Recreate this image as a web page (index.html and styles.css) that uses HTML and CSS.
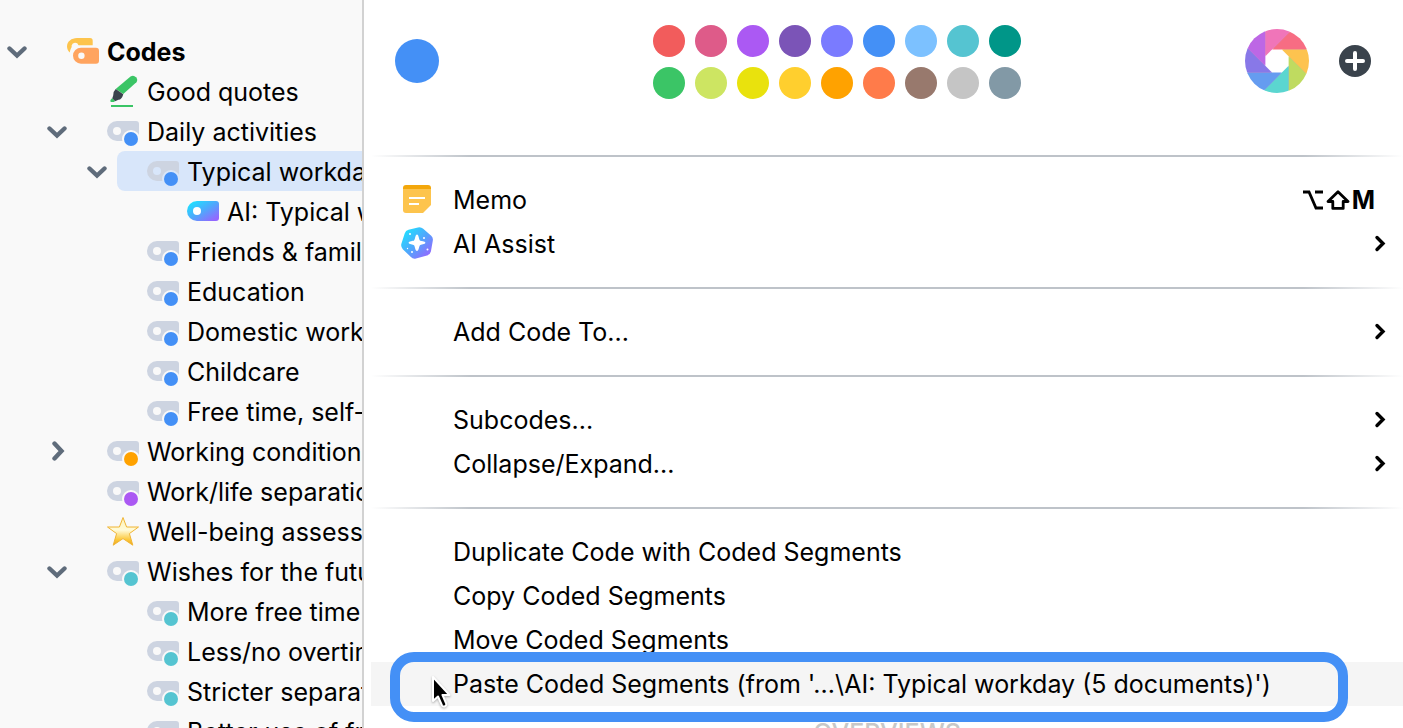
FILE: index.html
```html
<!DOCTYPE html>
<html lang="en">
    <head>
        <meta charset="UTF-8">
        <title>Codes</title>
        <link rel="stylesheet" href="styles.css">
    </head>
    <body>
        <!-- shared icons -->
        <svg class="defs">
            <defs>
                <linearGradient id="ai-fill" x1="0" y1="0" x2="1" y2="1">
                    <stop offset="0.1" stop-color="#1fe0ff"/>
                    <stop offset="0.5" stop-color="#4fa8fc"/>
                    <stop offset="0.9" stop-color="#9467ff"/>
                </linearGradient>
                <linearGradient id="star-fill" x1="0" y1="0" x2="0" y2="1">
                    <stop offset="0.1" stop-color="#fff3b8"/>
                    <stop offset="0.45" stop-color="#fffbd9"/>
                    <stop offset="0.8" stop-color="#fcc83a"/>
                    <stop offset="1" stop-color="#eca51c"/>
                </linearGradient>
                <clipPath id="wheel-clip"><circle cx="32" cy="32" r="32"/></clipPath>
            </defs>
            <symbol id="down" viewBox="0 0 20 20">
                <path d="M2.5 7.5L10 14.5L17.5 7.5" fill="none" stroke="#5f6c7b" stroke-width="4.4" stroke-linecap="round"/>
            </symbol>
            <symbol id="right" viewBox="0 0 20 20">
                <path d="M7.5 2.5L14.5 10L7.5 17.5" fill="none" stroke="#5f6c7b" stroke-width="4.4" stroke-linecap="round"/>
            </symbol>
            <symbol id="code" viewBox="0 0 32 40">
                <path class="tag-body" d="M10 10H29Q32 10 32 13V27Q32 30 29 30H10A10 10 0 0 1 10 10Z"/>
                <circle class="hole" cx="10" cy="20" r="4"/>
                <circle class="hole" cx="24" cy="28" r="9"/>
                <circle cx="24" cy="28" r="7" fill="currentColor"/>
            </symbol>
            <symbol id="more" viewBox="0 0 12 18">
                <path d="M3 2.5L9 8.5L3 14.5" fill="none" stroke="#000" stroke-width="3.4" stroke-linecap="round"/>
            </symbol>
        </svg>

        <div class="app">
            <nav class="tree">
                <ul>
                    <li>
                        <div class="row">
                            <button class="toggle" aria-label="Collapse"><svg><use href="#down"/></svg></button>
                            <span class="label root">
                                <svg class="icon" viewBox="0 0 32 40">
                                    <path fill="#fdc44d" d="M10 7H23Q25.7 7 25.7 9.8V14.3H11.5A3.6 3.6 0 0 0 4.6 14.5C5 16 4.2 17 3.6 18.2C3.2 19.2 3 20.3 2.8 21.5C1 19.8 0 17.6 0 15.5C0 10.5 4.5 7 10 7Z"/>
                                    <path fill="#ffa45f" d="M14 16.7H29Q32 16.7 32 19.7V29.5Q32 32.7 29 32.7H14A8 8 0 0 1 14 16.7Z"/>
                                    <circle class="hole" cx="14.4" cy="24.7" r="3.2"/>
                                </svg>
                                <span>Codes</span>
                            </span>
                        </div>
                        <ul>
                            <li>
                                <div class="row">
                                    <span class="toggle"></span>
                                    <span class="label">
                                        <svg class="icon" viewBox="0 0 32 40">
                                            <path fill="#3bc566" d="M8.7 18L23.5 5.5Q26.5 3.5 29 6.2Q31.3 8.8 29.4 11.3L16.3 23Z"/>
                                            <path fill="#3a434d" d="M8.7 18L16.3 23.2Q14.8 28.5 11.5 28.8L8 30.2L5.2 27.5L6.2 24.6Q6 20.5 8.7 18Z"/>
                                            <path fill="#3bc566" d="M5 27.2L8 30L7 31H4Q2.8 30.5 3.5 29Z"/>
                                            <path fill="#3bc566" d="M4 34H26V36H4Z"/>
                                        </svg>
                                        <span>Good quotes</span>
                                    </span>
                                </div>
                            </li>
                            <li>
                                <div class="row">
                                    <button class="toggle" aria-label="Collapse"><svg><use href="#down"/></svg></button>
                                    <span class="label"><svg class="icon blue"><use href="#code"/></svg><span>Daily activities</span></span>
                                </div>
                                <ul>
                                    <li>
                                        <div class="row">
                                            <button class="toggle" aria-label="Collapse"><svg><use href="#down"/></svg></button>
                                            <span class="label selected"><svg class="icon blue"><use href="#code"/></svg><span>Typical workday</span></span>
                                        </div>
                                        <ul>
                                            <li>
                                                <div class="row">
                                                    <span class="toggle"></span>
                                                    <span class="label">
                                                        <svg class="icon" viewBox="0 0 32 40">
                                                            <path fill="url(#ai-fill)" d="M10 10H29Q32 10 32 13V27Q32 30 29 30H10A10 10 0 0 1 10 10Z"/>
                                                            <circle cx="10" cy="20" r="4" fill="#fff"/>
                                                        </svg>
                                                        <span>AI: Typical workday</span>
                                                    </span>
                                                </div>
                                            </li>
                                        </ul>
                                    </li>
                                    <li><div class="row"><span class="toggle"></span><span class="label"><svg class="icon blue"><use href="#code"/></svg><span>Friends &amp; family</span></span></div></li>
                                    <li><div class="row"><span class="toggle"></span><span class="label"><svg class="icon blue"><use href="#code"/></svg><span>Education</span></span></div></li>
                                    <li><div class="row"><span class="toggle"></span><span class="label"><svg class="icon blue"><use href="#code"/></svg><span>Domestic work</span></span></div></li>
                                    <li><div class="row"><span class="toggle"></span><span class="label"><svg class="icon blue"><use href="#code"/></svg><span>Childcare</span></span></div></li>
                                    <li><div class="row"><span class="toggle"></span><span class="label"><svg class="icon blue"><use href="#code"/></svg><span>Free time, self-care</span></span></div></li>
                                </ul>
                            </li>
                            <li>
                                <div class="row">
                                    <button class="toggle" aria-label="Expand"><svg><use href="#right"/></svg></button>
                                    <span class="label"><svg class="icon orange"><use href="#code"/></svg><span>Working conditions</span></span>
                                </div>
                            </li>
                            <li><div class="row"><span class="toggle"></span><span class="label"><svg class="icon purple"><use href="#code"/></svg><span>Work/life separation</span></span></div></li>
                            <li>
                                <div class="row">
                                    <span class="toggle"></span>
                                    <span class="label">
                                        <svg class="icon" viewBox="0 0 32 40">
                                            <path fill="url(#star-fill)" stroke="#f0b535" stroke-width="1" stroke-linejoin="round" d="M16 6.5L19.6 16H31.5L22.4 22.6L25.8 34.2L16 27.6L6.2 34.2L9.6 22.6L0.5 16H12.4Z"/>
                                        </svg>
                                        <span>Well-being assessment</span>
                                    </span>
                                </div>
                            </li>
                            <li>
                                <div class="row">
                                    <button class="toggle" aria-label="Collapse"><svg><use href="#down"/></svg></button>
                                    <span class="label"><svg class="icon teal"><use href="#code"/></svg><span>Wishes for the future</span></span>
                                </div>
                                <ul>
                                    <li><div class="row"><span class="toggle"></span><span class="label"><svg class="icon teal"><use href="#code"/></svg><span>More free time</span></span></div></li>
                                    <li><div class="row"><span class="toggle"></span><span class="label"><svg class="icon teal"><use href="#code"/></svg><span>Less/no overtime</span></span></div></li>
                                    <li><div class="row"><span class="toggle"></span><span class="label"><svg class="icon teal"><use href="#code"/></svg><span>Stricter separation</span></span></div></li>
                                    <li><div class="row"><span class="toggle"></span><span class="label"><svg class="icon teal"><use href="#code"/></svg><span>Better use of free time</span></span></div></li>
                                </ul>
                            </li>
                        </ul>
                    </li>
                </ul>
            </nav>

            <div class="menu">
                <div class="colors">
                    <button class="current" aria-label="Current color"></button>
                    <div class="palette">
                        <button class="swatch" style="background:#f25c5c" aria-label="Red"></button>
                        <button class="swatch" style="background:#de5b89" aria-label="Pink"></button>
                        <button class="swatch" style="background:#ab59f3" aria-label="Purple"></button>
                        <button class="swatch" style="background:#7b54b7" aria-label="Violet"></button>
                        <button class="swatch" style="background:#7a7bff" aria-label="Indigo"></button>
                        <button class="swatch" style="background:#4490f6" aria-label="Blue"></button>
                        <button class="swatch" style="background:#7cc1ff" aria-label="Light blue"></button>
                        <button class="swatch" style="background:#55c4d1" aria-label="Turquoise"></button>
                        <button class="swatch" style="background:#009688" aria-label="Teal"></button>
                        <button class="swatch" style="background:#3bc566" aria-label="Green"></button>
                        <button class="swatch" style="background:#cde562" aria-label="Lime"></button>
                        <button class="swatch" style="background:#e9e20d" aria-label="Yellow"></button>
                        <button class="swatch" style="background:#ffcf2e" aria-label="Gold"></button>
                        <button class="swatch" style="background:#ffa200" aria-label="Orange"></button>
                        <button class="swatch" style="background:#ff7b4a" aria-label="Coral"></button>
                        <button class="swatch" style="background:#98796d" aria-label="Brown"></button>
                        <button class="swatch" style="background:#c5c5c5" aria-label="Gray"></button>
                        <button class="swatch" style="background:#8299a6" aria-label="Slate"></button>
                    </div>
                    <div class="tools">
                        <button aria-label="Color wheel">
                            <svg width="64" height="64" viewBox="0 0 64 64">
                                <circle cx="32" cy="32" r="22" fill="none" stroke="#c79ac0" stroke-width="18"/>
                                <g clip-path="url(#wheel-clip)">
                                    <path fill="#f76d83" d="M27.2 20.4L60 -12.4L80 20.4Z"/>
                                    <path fill="#fdc34f" transform="rotate(45 32 32)" d="M27.2 20.4L60 -12.4L80 20.4Z"/>
                                    <path fill="#bfdb60" transform="rotate(90 32 32)" d="M27.2 20.4L60 -12.4L80 20.4Z"/>
                                    <path fill="#5bd6d0" transform="rotate(135 32 32)" d="M27.2 20.4L60 -12.4L80 20.4Z"/>
                                    <path fill="#659cf0" transform="rotate(180 32 32)" d="M27.2 20.4L60 -12.4L80 20.4Z"/>
                                    <path fill="#8878e8" transform="rotate(225 32 32)" d="M27.2 20.4L60 -12.4L80 20.4Z"/>
                                    <path fill="#bd67e5" transform="rotate(270 32 32)" d="M27.2 20.4L60 -12.4L80 20.4Z"/>
                                    <path fill="#f075b9" transform="rotate(315 32 32)" d="M27.2 20.4L60 -12.4L80 20.4Z"/>
                                </g>
                            </svg>
                        </button>
                        <button aria-label="Add color">
                            <svg width="32" height="32" viewBox="0 0 32 32">
                                <circle cx="16" cy="16" r="16" fill="#3a434c"/>
                                <path d="M16 8V24M8 16H24" stroke="#fff" stroke-width="4" stroke-linecap="round"/>
                            </svg>
                        </button>
                    </div>
                </div>
                <hr>
                <button class="item">
                    <svg class="icon" viewBox="0 0 32 44">
                        <path fill="#fdc44d" d="M2 10H30V27L22 35H5Q2 35 2 32Z"/>
                        <path fill="#f3a70b" d="M2 11V10Q2 7 5 7H27Q30 7 30 10V11Z"/>
                        <path d="M8 20H24M8 26H18" stroke="#fff" stroke-width="2"/>
                    </svg>
                    <span>Memo</span>
                    <kbd>
                        <svg width="22" height="20" viewBox="0 0 22 20"><path d="M1 2H7L14 18H21M13 2H21" fill="none" stroke="#000" stroke-width="2.8"/></svg>
                        <svg width="24" height="20" viewBox="0 0 24 20"><path d="M12 1.8L22 11.5H17.2V18.4H6.8V11.5H2Z" fill="none" stroke="#000" stroke-width="2.8" stroke-linejoin="round"/></svg>
                        <span>M</span>
                    </kbd>
                </button>
                <button class="item">
                    <svg class="icon" viewBox="0 0 32 44">
                        <path fill="url(#ai-fill)" d="M3.7 11.5Q4.5 8.5 7.5 7.7L17 5.4Q20 4.7 22.2 6.8L30.2 13.7Q32.4 15.8 31.8 18.7L29.9 29.5Q29.2 32.6 26 33.5L15 36.5Q12 37.3 9.9 35L1.8 27.2Q-0.3 25 0.3 22Z"/>
                        <path fill="#fff" d="M16 12.5C17.8 12.5 18 18 19 18.5C19.6 19.2 24.4 19.2 24.4 20.8C24.4 22.4 19.6 22.4 19 23.2C18 24 17.8 29 16 29C14.2 29 14 24 13 23.2C12.4 22.4 7.6 22.4 7.6 20.8C7.6 19.2 12.4 19.2 13 18.5C14 18 14.2 12.5 16 12.5Z"/>
                        <g fill="#fff"><circle cx="9" cy="12" r="1"/><circle cx="23" cy="16" r="1"/><circle cx="6.5" cy="26.5" r=".7"/><circle cx="11" cy="30" r="1"/><circle cx="26.5" cy="27.5" r="1"/></g>
                    </svg>
                    <span>AI Assist</span>
                    <svg class="more"><use href="#more"/></svg>
                </button>
                <hr>
                <button class="item"><span class="icon"></span><span>Add Code To...</span><svg class="more"><use href="#more"/></svg></button>
                <hr>
                <button class="item"><span class="icon"></span><span>Subcodes...</span><svg class="more"><use href="#more"/></svg></button>
                <button class="item"><span class="icon"></span><span>Collapse/Expand...</span><svg class="more"><use href="#more"/></svg></button>
                <hr>
                <button class="item"><span class="icon"></span><span>Duplicate Code with Coded Segments</span></button>
                <button class="item"><span class="icon"></span><span>Copy Coded Segments</span></button>
                <button class="item"><span class="icon"></span><span>Move Coded Segments</span></button>
                <button class="item active">
                    <span class="icon"></span><span>Paste Coded Segments (from '...\AI: Typical workday (5 documents)')</span>
                    <span class="frame"></span>
                    <svg class="cursor" viewBox="0 0 24 38"><path d="M3 3V27L8 22.5L12 31.5Q13 33 15 32.2Q16.8 31.3 16.2 29.5L12.5 21H19.5Z" fill="#000" stroke="#fff" stroke-width="2" stroke-linejoin="round"/></svg>
                </button>
                <div class="heading">OVERVIEWS</div>
            </div>
        </div>
    </body>
</html>
```
FILE: styles.css
```css
*{
    box-sizing:border-box;
    margin:0;
    padding:0;
}
body{
    font-family:Inter, "Liberation Sans", sans-serif;
    font-size:25px;
    line-height:40px;
    color:#000;
    background-color:#fff;
    overflow:hidden;
}
ul{
    list-style:none;
}
button{
    border:none;
    background:none;
    font:inherit;
    color:inherit;
    cursor:pointer;
}
svg{
    display:block;
}
.defs{
    position:absolute;
    width:0;
    height:0;
}
.app{
    display:flex;
    height:100vh;
    overflow:hidden;
}

/* code tree */
.tree{
    --back:#f9f9f9;
    flex:0 0 362px;
    padding:31px 0 0 7px;
    background-color:var(--back);
    overflow:hidden;
    white-space:nowrap;
}
.tree ul ul{
    padding-left:40px;
}
.row{
    display:flex;
    gap:10px;
    height:40px;
}
.toggle{
    flex:none;
    width:20px;
}
.toggle svg{
    width:20px;
    height:20px;
}
.label{
    flex:1;
    display:flex;
    gap:8px;
    padding-left:30px;
    line-height:42px;
}
.root{
    font-weight:700;
}
.selected{
    --back:#d8e6fa;
    background-color:var(--back);
    border-radius:8px 0 0 8px;
}
.icon{
    flex:none;
    width:32px;
    height:40px;
}
.tag-body{
    fill:#cdd4e1;
}
.hole{
    fill:var(--back);
}
.blue{
    color:#4490f6;
}
.orange{
    color:#ffa200;
}
.purple{
    color:#ab59f3;
}
.teal{
    color:#55c4d1;
}

/* context menu */
.menu{
    flex:1;
    min-width:0;
    padding-left:7px;
    border-left:2px solid #d2d2d2;
    white-space:nowrap;
}
.colors{
    display:flex;
    justify-content:space-between;
    align-items:center;
    height:134px;
    padding:0 32px 12px 24px;
}
.current{
    width:44px;
    height:44px;
    border-radius:50%;
    background-color:#4490f6;
}
.palette{
    display:grid;
    grid-template-columns:repeat(9, 32px);
    gap:10px;
    margin:2px 10px 0 0;
}
.swatch{
    width:32px;
    height:32px;
    border-radius:50%;
}
.tools{
    display:flex;
    align-items:center;
    gap:30px;
}
hr{
    height:2px;
    margin:21px 0;
    border:none;
    background:linear-gradient(to right, transparent, #bec3c9 100px, #bec3c9 calc(100% - 100px), transparent);
}
.item{
    position:relative;
    display:flex;
    align-items:center;
    gap:20px;
    width:100%;
    height:44px;
    padding:0 17px 0 30px;
    text-align:left;
}
.item .icon{
    height:44px;
}
.more{
    width:12px;
    height:18px;
    margin-left:auto;
}
kbd{
    display:flex;
    align-items:center;
    gap:2px;
    margin:0 11px 0 auto;
    font:inherit;
    font-weight:700;
}
.active{
    background-color:#f5f5f5;
}
.frame{
    position:absolute;
    top:-10px;
    right:55px;
    bottom:-16px;
    left:19px;
    border:10px solid #4490f6;
    border-radius:24px;
}
.cursor{
    position:absolute;
    top:12px;
    left:59px;
    width:24px;
    height:38px;
    filter:drop-shadow(0 1px 1px rgba(0, 0, 0, .3));
}
.heading{
    padding-top:7px;
    font-size:25px;
    font-weight:500;
    text-align:center;
    color:#c8c8c8;
}
```
